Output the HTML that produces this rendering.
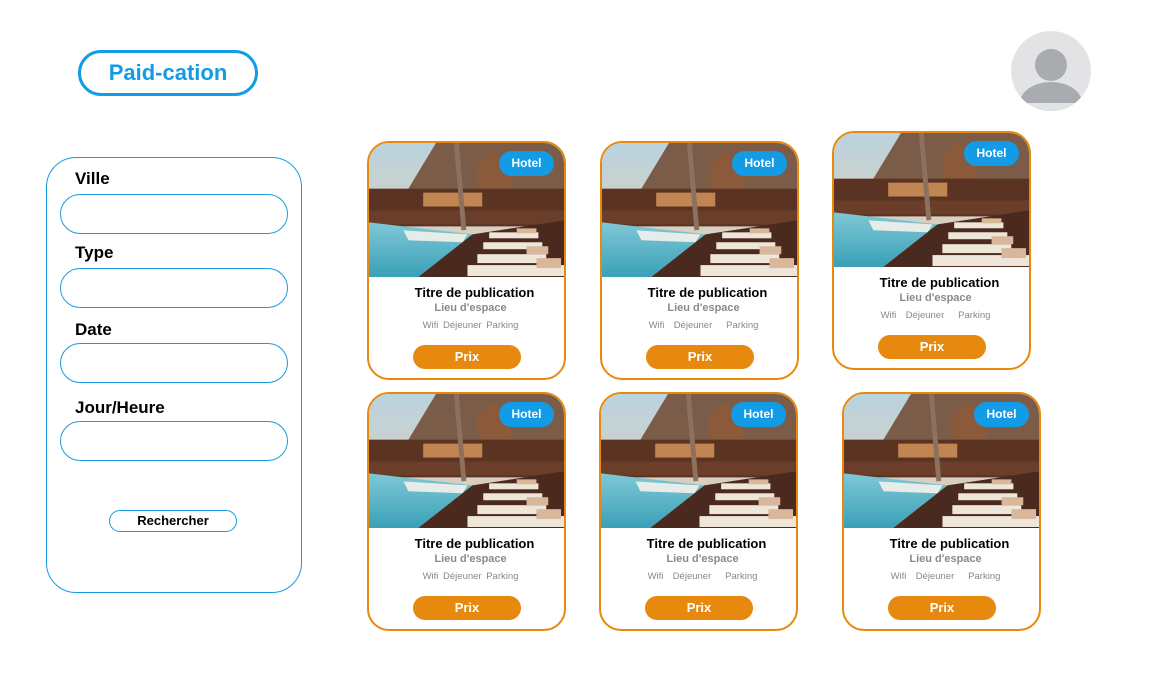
<!DOCTYPE html>
<html><head><meta charset="utf-8"><style>
*{box-sizing:border-box;margin:0;padding:0}
body{width:1152px;height:700px;background:#fff;position:relative;overflow:hidden;font-family:"Liberation Sans",Arial,sans-serif}
.logo{position:absolute;left:78px;top:50px;width:180px;height:46px;border:3px solid #139be6;border-radius:23px;color:#139be6;font-weight:bold;font-size:22px;text-align:center;line-height:40px}
.avatar{position:absolute;left:1011px;top:31px;width:80px;height:80px;border-radius:50%;background:#e3e3e5;overflow:hidden}
.side{position:absolute;left:46px;top:157px;width:256px;height:436px;border:1px solid #1a9be0;border-radius:30px}
.lbl{position:absolute;left:75px;font-weight:bold;font-size:17px;color:#000}
.inp{position:absolute;left:60px;width:228px;height:40px;border:1px solid #1a9be0;border-radius:20px}
.btn{position:absolute;left:109px;top:510px;width:128px;height:22px;border:1px solid #1a9be0;border-radius:11px;font-size:13px;font-weight:bold;text-align:center;line-height:20px}
.card{position:absolute;width:199px;height:239px;border:2px solid #e8890f;border-radius:22px;overflow:hidden;background:#fff}
.card svg.img{position:absolute;left:0;top:0;width:195px;height:134px}
.badge{position:absolute;right:10px;top:8px;width:55px;height:25px;border-radius:13px;background:#139be6;color:#fff;font-weight:bold;font-size:12px;text-align:center;line-height:25px}
.t{position:absolute;left:16px;right:0;top:142px;text-align:center;font-weight:bold;font-size:13px;color:#000}
.l{position:absolute;left:8px;right:0;top:159px;text-align:center;font-weight:bold;font-size:11px;color:#8a8a8a}
.a{position:absolute;left:8px;right:0;top:177px;text-align:center;font-size:9.5px;color:#888;word-spacing:2px}
.p{position:absolute;left:44px;top:202px;width:108px;height:24px;border-radius:12px;background:#e8890f;color:#fff;font-weight:bold;font-size:13px;text-align:center;line-height:24px}
</style></head><body>
<svg width="0" height="0" style="position:absolute"><defs>
<linearGradient id="sky" x1="0" y1="0" x2="0" y2="1"><stop offset="0" stop-color="#b9d3df"/><stop offset="1" stop-color="#e9cdb0"/></linearGradient>
<linearGradient id="pool" x1="0" y1="0" x2="0" y2="1"><stop offset="0" stop-color="#7fc8d6"/><stop offset="1" stop-color="#3aa0b8"/></linearGradient>
<g id="scene">
<rect width="198" height="135" fill="url(#sky)"/>
<polygon points="40,46 68,0 198,0 198,58 150,52 40,48" fill="#7a5c48"/>
<polygon points="110,22 125,8 145,28 145,46 110,46" fill="#8a5a3a"/>
<rect x="0" y="46" width="198" height="38" fill="#5a3323"/>
<rect x="55" y="50" width="60" height="14" fill="#d99a5d" opacity=".8"/>
<rect x="0" y="68" width="198" height="14" fill="#6b3e2a"/>
<rect x="90" y="0" width="5" height="88" fill="#8c7060" transform="rotate(-5 92 44)"/>
<polygon points="0,80 105,92 50,135 0,135" fill="url(#pool)"/>
<polygon points="105,92 50,135 198,135 198,78" fill="#4a2a1e"/>
<polygon points="35,88 100,92 95,100 40,98" fill="#e8ece8"/>
<g fill="#efe6da"><rect x="122" y="90" width="50" height="6"/><rect x="116" y="100" width="60" height="7"/><rect x="110" y="112" width="70" height="9"/><rect x="100" y="123" width="98" height="11"/></g>
<g fill="#d8b79a"><rect x="150" y="86" width="20" height="5"/><rect x="160" y="104" width="22" height="8"/><rect x="170" y="116" width="25" height="10"/></g>
</g></defs></svg>

<div class="logo">Paid-cation</div>
<div class="avatar"><svg width="80" height="80"><circle cx="40" cy="34" r="16" fill="#a8abaf"/><ellipse cx="40" cy="72" rx="31" ry="21" fill="#a8abaf"/><rect x="0" y="72" width="80" height="8" fill="#e3e3e5"/></svg></div>

<div class="side"></div>
<div class="lbl" style="top:169px">Ville</div><div class="inp" style="top:194px"></div>
<div class="lbl" style="top:243px">Type</div><div class="inp" style="top:268px"></div>
<div class="lbl" style="top:320px">Date</div><div class="inp" style="top:343px"></div>
<div class="lbl" style="top:398px">Jour/Heure</div><div class="inp" style="top:421px"></div>
<div class="btn">Rechercher</div>

<div class="card" style="left:367px;top:141px"><svg class="img" viewBox="0 0 198 135" preserveAspectRatio="none"><use href="#scene"/></svg><div class="badge">Hotel</div><div class="t">Titre de publication</div><div class="l">Lieu d'espace</div><div class="a">Wifi Déjeuner Parking</div><div class="p">Prix</div></div>
<div class="card" style="left:600px;top:141px"><svg class="img" viewBox="0 0 198 135" preserveAspectRatio="none"><use href="#scene"/></svg><div class="badge">Hotel</div><div class="t">Titre de publication</div><div class="l">Lieu d'espace</div><div class="a">Wifi &nbsp;Déjeuner &nbsp;&nbsp;Parking</div><div class="p">Prix</div></div>
<div class="card" style="left:832px;top:131px"><svg class="img" viewBox="0 0 198 135" preserveAspectRatio="none"><use href="#scene"/></svg><div class="badge">Hotel</div><div class="t">Titre de publication</div><div class="l">Lieu d'espace</div><div class="a">Wifi &nbsp;Déjeuner &nbsp;&nbsp;Parking</div><div class="p">Prix</div></div>
<div class="card" style="left:367px;top:392px"><svg class="img" viewBox="0 0 198 135" preserveAspectRatio="none"><use href="#scene"/></svg><div class="badge">Hotel</div><div class="t">Titre de publication</div><div class="l">Lieu d'espace</div><div class="a">Wifi Déjeuner Parking</div><div class="p">Prix</div></div>
<div class="card" style="left:599px;top:392px"><svg class="img" viewBox="0 0 198 135" preserveAspectRatio="none"><use href="#scene"/></svg><div class="badge">Hotel</div><div class="t">Titre de publication</div><div class="l">Lieu d'espace</div><div class="a">Wifi &nbsp;Déjeuner &nbsp;&nbsp;Parking</div><div class="p">Prix</div></div>
<div class="card" style="left:842px;top:392px"><svg class="img" viewBox="0 0 198 135" preserveAspectRatio="none"><use href="#scene"/></svg><div class="badge">Hotel</div><div class="t">Titre de publication</div><div class="l">Lieu d'espace</div><div class="a">Wifi &nbsp;Déjeuner &nbsp;&nbsp;Parking</div><div class="p">Prix</div></div>
</body></html>
